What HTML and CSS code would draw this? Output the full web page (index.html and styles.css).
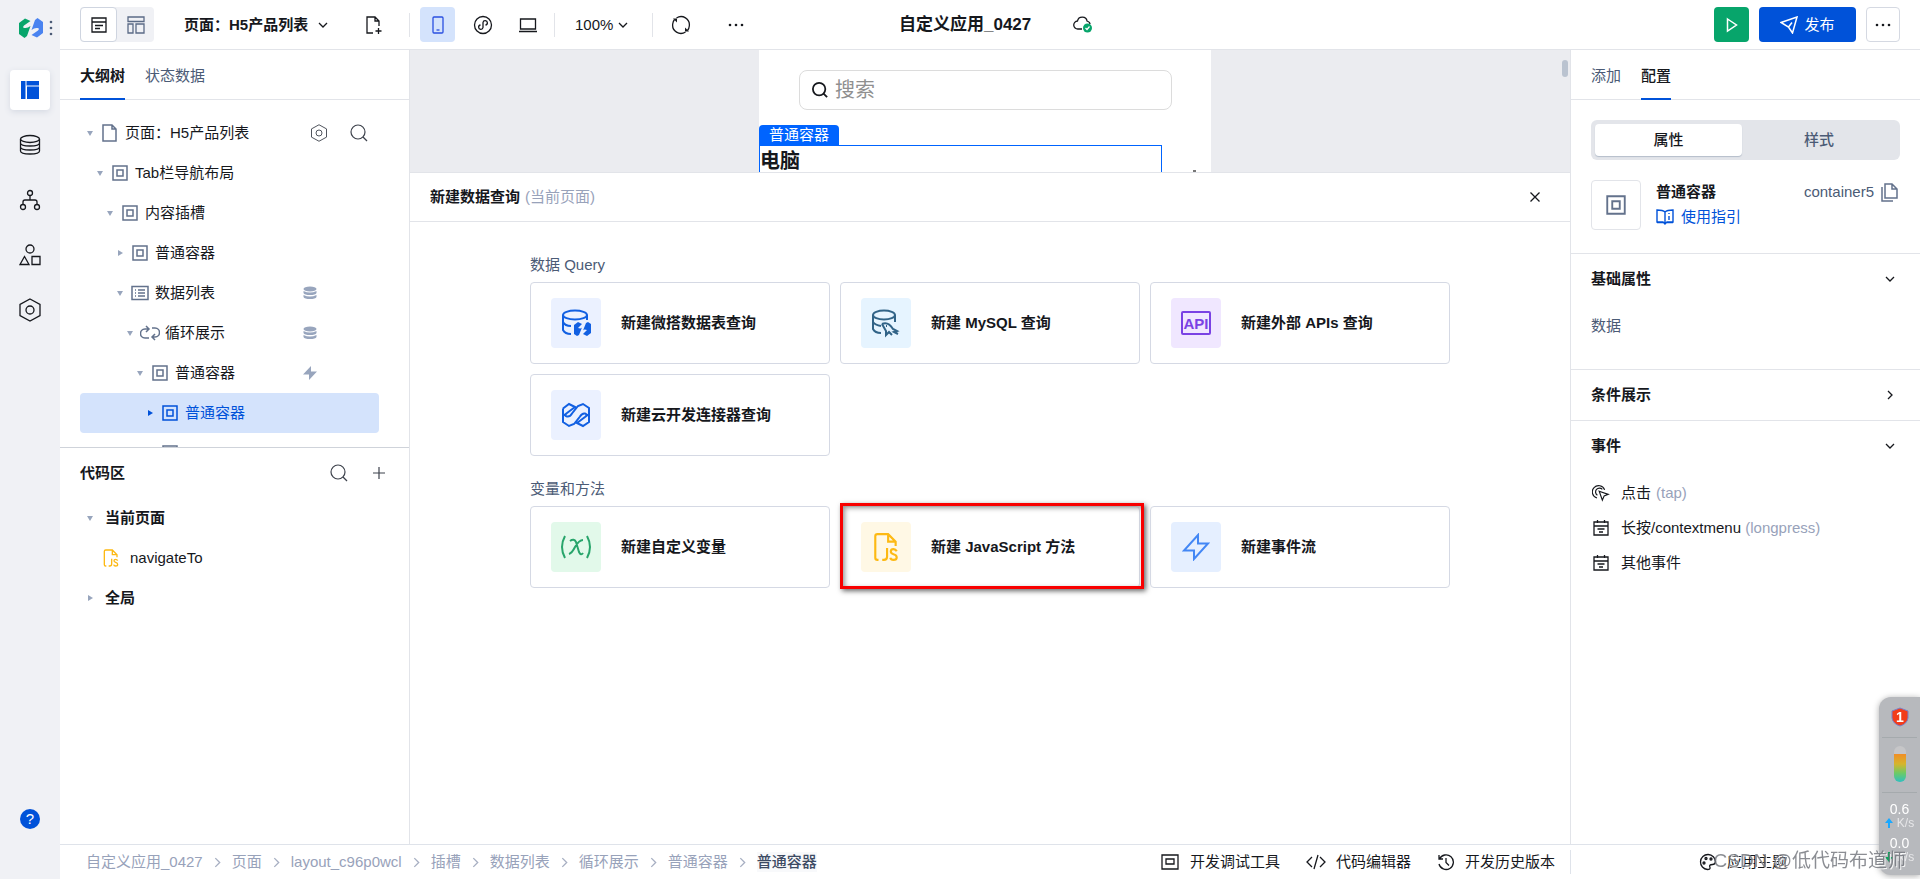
FILE: index.html
```html
<!DOCTYPE html>
<html lang="zh-CN">
<head>
<meta charset="utf-8">
<meta name="viewport" content="width=device-width, initial-scale=1">
<title>自定义应用_0427</title>
<link rel="stylesheet" href="styles.css">
</head>
<body>
<svg class="defs" aria-hidden="true">
  <symbol id="box" viewBox="0 0 16 16"><path d="M1 1h14v14H1zM5 5h6v6H5z"/></symbol>
  <symbol id="search" viewBox="0 0 18 18"><circle cx="8" cy="8" r="7"/><path d="M13 13l4 4"/></symbol>
  <symbol id="down" viewBox="0 0 10 10"><path d="M1 3l4 4 4-4"/></symbol>
  <symbol id="right" viewBox="0 0 10 10"><path d="M3 1l4 4-4 4"/></symbol>
  <symbol id="stack" viewBox="0 0 14 14"><ellipse class="solid" cx="7" cy="3" rx="6.500" ry="2.500"/><path class="solid" d="M.5 5q6.500 3 13 0v2q-1 2-6.500 2T.5 7zM.5 9q6.500 3.200 13 0v2q-1 2-6.500 2T.5 11z"/></symbol>
  <symbol id="jsfile" viewBox="0 0 24 28"><path d="M5 26H4a2 2 0 0 1-2-2V4a2 2 0 0 1 2-2h10l7 7v4M14 2v7h7M13 15v8q0 3-3 3H8.500M22 18q-1-2-3-2-2.500 0-2.500 2.200 0 1.600 2.500 2.500 3 .8 3 3 0 2.300-3 2.300-2.500 0-3-2"/></symbol>
  <symbol id="hex" viewBox="0 0 24 24"><path d="M12 1l10 5.500v11L12 23 2 17.500v-11z"/><circle cx="12" cy="12" r="4"/></symbol>
  <symbol id="event" viewBox="0 0 18 18"><path d="M2 3h14v13H2zM2 7h14M5.500 1v3M12.500 1v3M5.500 10h7M7 13h4"/></symbol>
</svg>

<div class="app">
  <nav class="rail" aria-label="主导航">
    <div class="brand">
      <svg width="24" height="20" viewBox="0 0 24 20"><path fill="#07a56b" d="M0 5l6-4.500L11.500 3 5 7.500Q3 9.500 5.500 10q3 .5 6-2L8 18l-2.500 2L0 16z"/><path fill="#4a83f0" d="M24 15l-6 4.500L12.500 17l6.500-4.500q2-2-.5-2.500-3-.5-6 2L16 2l2.500-2L24 4z"/></svg>
      <svg class="dots" width="4" height="16" viewBox="0 0 4 16"><circle cx="2" cy="2" r="1.300"/><circle cx="2" cy="8" r="1.300"/><circle cx="2" cy="14" r="1.300"/></svg>
    </div>
    <button class="rail-item active" aria-label="页面"><svg width="20" height="20" viewBox="0 0 20 20"><path fill="#0052d9" d="M1 1h4.500v18H1zM6.500 1H19v4.500H6.500zM7 6.500h12V19H7z"/></svg></button>
    <button class="rail-item" aria-label="数据"><svg class="line" width="22" height="22" viewBox="0 0 22 22"><ellipse cx="11" cy="5" rx="9.500" ry="3.500"/><path d="M1.500 5v12c0 4 19 4 19 0V5M1.500 9c0 4 19 4 19 0M1.500 13c0 4 19 4 19 0"/></svg></button>
    <button class="rail-item" aria-label="流程"><svg class="line" width="22" height="22" viewBox="0 0 22 22"><circle cx="11" cy="4" r="2.500"/><circle cx="4" cy="18" r="2.500"/><circle cx="18" cy="18" r="2.500"/><path d="M11 6.500V11M4 15.500V13q0-2 2-2h10q2 0 2 2v2.500"/></svg></button>
    <button class="rail-item" aria-label="组件"><svg class="line" width="22" height="22" viewBox="0 0 22 22"><circle cx="11" cy="5" r="4"/><path d="M5.500 12.500l4.500 8H1zM13 12.500h8v8h-8z"/></svg></button>
    <button class="rail-item" aria-label="设置"><svg class="line" width="24" height="24"><use href="#hex"/></svg></button>
    <button class="help" aria-label="帮助">?</button>
  </nav>

  <div class="workspace">
    <header class="topbar">
      <div class="view-toggle">
        <button class="on" aria-label="单页视图"><svg class="line" width="18" height="18" viewBox="0 0 18 18"><path d="M2 2h14v14H2zM2 6h14M5 9.500h8M5 12.500h5"/></svg></button>
        <button aria-label="布局视图"><svg class="line muted" width="18" height="18" viewBox="0 0 18 18"><path d="M1 1h16v4.500H1zM1 8h5v9H1zM9 8h8v9H9z"/></svg></button>
      </div>
      <div class="picker page-picker"><select aria-label="当前页面"><option>页面：H5产品列表</option></select><svg class="line" width="10" height="10"><use href="#down"/></svg></div>
      <button class="icon-btn add-page" aria-label="新建页面"><svg class="line" width="18" height="20" viewBox="0 0 18 20"><path d="M8 18H2V2h8l4 4v5M10 2v4h4M13.500 13v6M10.500 16h6"/></svg></button>
      <span class="rule"></span>
      <div class="devices">
        <button class="icon-btn selected" aria-label="手机"><svg class="line" width="12" height="18" viewBox="0 0 12 18"><rect x="1" y="1" width="10" height="16" rx="1"/><path d="M4.500 14h3"/></svg></button>
        <button class="icon-btn" aria-label="小程序"><svg class="line" width="20" height="20" viewBox="0 0 20 20"><circle cx="10" cy="10" r="8.500"/><path d="M10 12.500V7.500a2.200 2.200 0 1 1 2.500 2.500M10 7.500v5a2.200 2.200 0 1 1-2.500-2.500"/></svg></button>
        <button class="icon-btn" aria-label="电脑"><svg class="line" width="18" height="16" viewBox="0 0 18 16"><path d="M1.500 2h15v10h-15zM0 14.500h18"/></svg></button>
      </div>
      <span class="rule"></span>
      <div class="picker zoom-picker"><select aria-label="缩放"><option>100%</option></select><svg class="line" width="10" height="10"><use href="#down"/></svg></div>
      <span class="rule"></span>
      <button class="icon-btn refresh" aria-label="刷新"><svg class="line" width="20" height="20" viewBox="0 0 20 20"><path d="M5.500 3a8.300 8.300 0 0 1 12.800 8M14.500 17a8.300 8.300 0 0 1-12.800-8M3.500 4.500A8 8 0 0 0 1.700 9M16.500 15.500A8 8 0 0 0 18.300 11"/><path class="tip" d="M2 3.500h4v4zM18 16.500h-4v-4z"/></svg></button>
      <button class="icon-btn more-tools" aria-label="更多"><svg width="16" height="4" viewBox="0 0 16 4"><circle cx="2" cy="2" r="1.300"/><circle cx="8" cy="2" r="1.300"/><circle cx="14" cy="2" r="1.300"/></svg></button>
      <h1>自定义应用_0427</h1>
      <svg class="cloud" width="20" height="17" viewBox="0 0 20 17"><path class="outline" d="M9 13H5a4 4 0 0 1-.5-8C5.500-.5 13.500 0 14 5q3 1 3 3"/><circle cx="14.500" cy="12" r="4.500" fill="#07a56b"/><path d="M12.500 12l1.500 1.500 2.500-3" fill="none" stroke="#fff" stroke-width="1.200"/></svg>
      <div class="actions">
        <button class="run" aria-label="预览"><svg width="12" height="16" viewBox="0 0 12 16"><path d="M1.500 2l9 6-9 6z"/></svg></button>
        <button class="publish"><svg width="18" height="18" viewBox="0 0 18 18"><path d="M1 6.500L17 1l-4.500 16-4-6zM8.500 11L12 6.500"/></svg>发布</button>
        <button class="more" aria-label="更多操作"><svg width="16" height="4" viewBox="0 0 16 4"><circle cx="2" cy="2" r="1.300"/><circle cx="8" cy="2" r="1.300"/><circle cx="14" cy="2" r="1.300"/></svg></button>
      </div>
    </header>

    <div class="columns">
      <aside class="outline-panel">
        <div class="tabs" role="tablist"><button role="tab" class="current" aria-selected="true">大纲树</button><button role="tab">状态数据</button></div>
        <ul class="tree">
          <li class="lv0"><span class="caret"></span><svg class="slate" width="16" height="20" viewBox="0 0 16 20"><path d="M1 2h9l4 4v12H1zM10 2v4h4"/></svg><span>页面：H5产品列表</span>
            <span class="root-tools"><button class="bare" aria-label="页面设置"><svg class="line thin" width="18" height="18"><use href="#hex"/></svg></button><button class="bare" aria-label="搜索"><svg class="line thin" width="18" height="18"><use href="#search"/></svg></button></span></li>
          <li class="lv1"><span class="caret"></span><svg class="slate"><use href="#box"/></svg><span>Tab栏导航布局</span></li>
          <li class="lv2"><span class="caret"></span><svg class="slate"><use href="#box"/></svg><span>内容插槽</span></li>
          <li class="lv3"><span class="caret shut"></span><svg class="slate"><use href="#box"/></svg><span>普通容器</span></li>
          <li class="lv3"><span class="caret"></span><svg class="slate wide" viewBox="0 0 20 16"><path d="M2 1.500h16v13H2zM5 5h1M5 8h1M5 11h1M8 5h7M8 8h7M8 11h7"/></svg><span>数据列表</span><svg class="mark"><use href="#stack"/></svg></li>
          <li class="lv4"><span class="caret"></span><svg class="slate wide" viewBox="0 0 20 16"><path d="M9 13H5C-1 13-1 4 5 4h3M6 1l3 3-3 3M12 3h3c6 0 6 9 0 9h-3M15 9l-3 3 3 3"/></svg><span>循环展示</span><svg class="mark"><use href="#stack"/></svg></li>
          <li class="lv5"><span class="caret"></span><svg class="slate"><use href="#box"/></svg><span>普通容器</span><svg class="mark" viewBox="0 0 14 14"><path class="solid" d="M8 0v5.500h6L6 14V8.500H0z"/></svg></li>
          <li class="lv6 picked"><span class="caret shut"></span><svg class="slate"><use href="#box"/></svg><span>普通容器</span></li>
          <li class="lv6"><span class="caret"></span><svg class="slate"><use href="#box"/></svg></li>
        </ul>
        <section class="code">
          <header><h2>代码区</h2><button class="bare" aria-label="搜索代码"><svg class="line thin" width="18" height="18"><use href="#search"/></svg></button><button class="bare" aria-label="新建"><svg class="line thin" width="14" height="14" viewBox="0 0 14 14"><path d="M7 1v12M1 7h12"/></svg></button></header>
          <ul>
            <li><span class="caret"></span><b>当前页面</b></li>
            <li class="file"><svg width="16" height="20"><use href="#jsfile"/></svg>navigateTo</li>
            <li><span class="caret shut"></span><b>全局</b></li>
          </ul>
        </section>
      </aside>

      <main class="stage">
        <div class="canvas">
          <div class="phone">
            <label class="phone-search"><svg class="line" width="16" height="16"><use href="#search"/></svg><input type="search" placeholder="搜索" aria-label="搜索"></label>
            <span class="sel-tag">普通容器</span>
            <div class="sel-box">电脑</div>
            <span class="speck"></span>
          </div>
          <span class="thumb"></span>
        </div>
        <section class="dialog">
          <header><h2>新建数据查询</h2><span>(当前页面)</span><button class="bare" aria-label="关闭"><svg class="line" width="12" height="12" viewBox="0 0 12 12"><path d="M1.500 1.500l9 9M10.500 1.500l-9 9"/></svg></button></header>
          <div class="choices">
            <h3>数据 Query</h3>
            <div class="grid">
              <button class="card"><i class="blue"><svg width="30" height="30" viewBox="0 0 30 30"><ellipse cx="14" cy="7" rx="12" ry="4.500"/><path d="M2 7v15q2 4 8 4M2 14q2 4 8 4M26 7v5"/><path class="solid" d="M13 17l4-3 4 2-4 4q3 1 4-.5L18 27l-2 1-3-2zM30 25l-4 3-4-2 4-4q-3-1-4 .5L25 15l2-1 3 2z"/></svg></i>新建微搭数据表查询</button>
              <button class="card"><i class="sky"><svg width="30" height="30" viewBox="0 0 30 30"><ellipse cx="13" cy="7" rx="11" ry="4.500"/><path d="M2 7v14q2 4 8 4M24 7v7M2 14q2 3 8 4M11 16q6-3 11 5l4 2-3 1 4 2M11 16l4 7v4l3-3 3 3M15 18h1"/></svg></i>新建 MySQL 查询</button>
              <button class="card"><i class="violet"><svg width="32" height="26" viewBox="0 0 32 26"><rect x="2" y="2" width="28" height="22" rx="1"/><text x="16" y="19" text-anchor="middle" font-size="15">API</text></svg></i>新建外部 APIs 查询</button>
              <button class="card"><i class="blue"><svg width="30" height="26" viewBox="0 0 30 26"><path d="M2 6.500L8 2l6 3-8 6q-3 2.500 0 3.500 3 .5 5-3L17 4l5-2 6 4v14l-6 4-6-3 8-6q3-2.500 0-3.500-3-.5-5 3L13 22l-5 2-6-4V6.500M6 11l-4 3M24 15l4-3"/></svg></i>新建云开发连接器查询</button>
            </div>
            <h3>变量和方法</h3>
            <div class="grid">
              <button class="card"><i class="green"><svg width="34" height="30" viewBox="0 0 34 30"><path d="M6 4q-6 11 0 22M28 4q6 11 0 22M11 9q4-3 6 1l3 10q2 4 4 1M24 8q-4 0-8 7-3 6-6 7"/></svg></i>新建自定义变量</button>
              <button class="card flagged"><i class="amber"><svg width="26" height="30"><use href="#jsfile"/></svg></i>新建 JavaScript 方法</button>
              <button class="card"><i class="azure"><svg width="28" height="28" viewBox="0 0 28 28"><path d="M16 2v8.500h10L12 26v-8.500H2z"/></svg></i>新建事件流</button>
            </div>
          </div>
        </section>
      </main>

      <aside class="props">
        <div class="tabs" role="tablist"><button role="tab">添加</button><button role="tab" class="current" aria-selected="true">配置</button></div>
        <section class="identity">
          <div class="segmented"><button class="on">属性</button><button>样式</button></div>
          <div class="component">
            <div class="preview"><svg class="slate" width="20" height="20"><use href="#box"/></svg></div>
            <div class="naming"><h2>普通容器</h2><a href="#guide"><svg width="18" height="18" viewBox="0 0 18 18"><path d="M9 15V4Q7 2 1 2v12h6l2 2 2-2h6V2q-6 0-8 2M13 5v1M13 8v4M1 14.500h6M11 14.500h6"/></svg>使用指引</a></div>
            <div class="ident">container5<button class="bare" aria-label="复制"><svg class="slate" width="17" height="19" viewBox="0 0 17 19"><path d="M4 1h7l5 5v9H4zM11 1v5h5M1 4v14h11"/></svg></button></div>
          </div>
        </section>
        <section class="group"><button class="fold">基础属性<svg class="line"><use href="#down"/></svg></button><p class="field">数据</p></section>
        <section class="group"><button class="fold">条件展示<svg class="line"><use href="#right"/></svg></button></section>
        <section class="group"><button class="fold">事件<svg class="line"><use href="#down"/></svg></button>
          <ul class="events">
            <li><svg class="line" width="20" height="20" viewBox="0 0 20 20"><path d="M8 8l10 3.500-4.500 1.700L11.500 18zM6 12.500A4.300 4.300 0 1 1 11.500 6M5.500 15.500A7 7 0 1 1 14 6.500"/></svg>点击 <em>(tap)</em></li>
            <li><svg class="line" width="18" height="18"><use href="#event"/></svg><span>长按/contextmenu <em>(longpress)</em></span></li>
            <li><svg class="line" width="18" height="18"><use href="#event"/></svg>其他事件</li>
          </ul>
        </section>
      </aside>
    </div>

    <footer class="statusbar">
      <nav class="crumbs" aria-label="层级">
        <a href="#app">自定义应用_0427</a><svg><use href="#right"/></svg><a href="#page">页面</a><svg><use href="#right"/></svg><a href="#layout">layout_c96p0wcl</a><svg><use href="#right"/></svg><a href="#slot">插槽</a><svg><use href="#right"/></svg><a href="#list">数据列表</a><svg><use href="#right"/></svg><a href="#loop">循环展示</a><svg><use href="#right"/></svg><a href="#outer">普通容器</a><svg><use href="#right"/></svg><a href="#inner" class="here">普通容器</a>
      </nav>
      <div class="dev-tools">
        <button><svg class="line" width="20" height="18" viewBox="0 0 20 18"><path d="M2 2h16v14H2zM6 6h8v5H6z"/></svg>开发调试工具</button>
        <button><svg class="line" width="20" height="18" viewBox="0 0 20 18"><path d="M6 4L1 9l5 5M14 4l5 5-5 5M12 2L8 16"/></svg>代码编辑器</button>
        <button><svg class="line" width="18" height="18" viewBox="0 0 18 18"><path d="M2 2v4h4M2.500 6A7.300 7.300 0 1 1 2 11M9 5v4.500l3 3"/></svg>开发历史版本</button>
      </div>
      <div class="theme"><button><svg class="line" width="18" height="18" viewBox="0 0 18 18"><path d="M8.500 16.500a7.500 7.500 0 1 1 8-7.500q-.5 2.500-3 2.500-4 0-2.500 3 .5 2-2.500 2z"/><circle cx="5" cy="10" r="1"/><circle cx="7" cy="5.500" r="1"/><circle cx="12" cy="6" r="1"/></svg>应用主题</button></div>
    </footer>
  </div>
</div>

<div class="monitor">
  <svg width="18" height="20" viewBox="0 0 18 20"><path d="M9 1l8 3v7q-1 6-8 8-7-2-8-8V4z" fill="#f23c1b" stroke="#7b80c8"/><text x="9" y="15" text-anchor="middle" font-size="14" font-weight="700" fill="#fff">1</text></svg>
  <hr><span class="tube"></span><hr>
  <div class="rate"><span>0.6</span><small><svg width="8" height="10" viewBox="0 0 8 10"><path d="M4 0l4 5H5v5H3V5H0z" fill="#1aa8ff"/></svg>K/s</small></div>
  <div class="rate"><span>0.0</span><small><svg width="8" height="10" viewBox="0 0 8 10"><path d="M4 10l4-5H5V0H3v5H0z" fill="#12a05c"/></svg>K/s</small></div>
</div>
<div class="watermark">CSDN @低代码布道师</div>
</body>
</html>
```
FILE: styles.css
```css
* { box-sizing: border-box; }
body { margin: 0; font: 15px/20px "Liberation Sans", "Noto Sans CJK SC", sans-serif; color: #16181d; background: #fff; overflow: hidden; }
button, input, select { font: inherit; color: inherit; border: 0; padding: 0; margin: 0; background: none; }
h1, h2, h3, p, ul { margin: 0; padding: 0; font-size: 15px; line-height: 20px; }
ul { list-style: none; }
a { text-decoration: none; color: inherit; }
em, i { font-style: normal; }
svg { flex: none; display: block; fill: none; }
.defs { position: absolute; width: 0; height: 0; }
.line { stroke: #16181d; stroke-width: 1.3; }
.line.thin { stroke: #3d424c; stroke-width: 1.2; }
.line.muted { stroke: #5b6b86; }
.slate { stroke: #63728c; stroke-width: 1.5; }
.solid { fill: currentColor; stroke: none; }
.bare { display: grid; place-items: center; }

.app { display: flex; height: 100vh; }
.rail { flex: 0 0 60px; background: #f0f1f5; display: flex; flex-direction: column; align-items: center; padding-bottom: 50px; }
.brand { display: flex; align-items: center; gap: 6px; height: 55px; padding-left: 11px; margin-bottom: 15px; }
.dots { fill: #4b5b76; }
.rail-item { width: 40px; height: 40px; margin-bottom: 15px; display: grid; place-items: center; border-radius: 4px; }
.rail-item.active { background: #fff; box-shadow: 0 2px 6px #d5d9e2; }
.help { width: 20px; height: 20px; margin-top: auto; border-radius: 50%; background: #0052d9; color: #fff; }
.workspace { flex: 1; min-width: 0; display: flex; flex-direction: column; }

.topbar { flex: 0 0 50px; border-bottom: 1px solid #e2e4e9; display: flex; align-items: center; padding: 0 20px; }
.view-toggle { display: flex; height: 35px; background: #f0f1f5; border-radius: 4px; }
.view-toggle button { width: 37px; display: grid; place-items: center; border-radius: 4px; }
.view-toggle .on { background: #fff; border: 1px solid #cfd5e0; }
.picker { position: relative; display: flex; align-items: center; }
.picker select { appearance: none; outline: 0; width: 100%; }
.picker svg { position: absolute; right: 0; pointer-events: none; }
.page-picker { width: 144px; margin-left: 30px; font-weight: 700; }
.icon-btn { width: 35px; height: 35px; display: grid; place-items: center; border-radius: 4px; }
.icon-btn circle { fill: #16181d; }
.icon-btn .line circle { fill: none; }
.icon-btn .tip { fill: #16181d; stroke: none; }
.add-page { margin: 0 18px 0 28px; }
.rule { width: 1px; height: 24px; background: #e2e4e9; }
.devices { display: flex; gap: 10px; margin: 0 9px 0 10px; }
.selected { background: #d4e3fc; }
.selected .line { stroke: #2a50e0; }
.zoom-picker { width: 53px; margin: 0 24px 0 20px; }
.refresh { margin: 0 20px 0 10px; }
h1 { font-size: 17px; margin-left: 146px; white-space: nowrap; }
.cloud { margin-left: 42px; }
.cloud .outline { stroke: #16181d; stroke-width: 1.3; }
.actions { display: flex; gap: 10px; margin-left: auto; }
.actions button { height: 35px; border-radius: 4px; display: flex; align-items: center; justify-content: center; gap: 6px; }
.actions .run { width: 35px; background: #07a56b; }
.actions .publish { width: 97px; background: #0052d9; color: #fff; }
.run svg, .publish svg { stroke: #fff; stroke-width: 1.5; }
.actions .more { width: 34px; border: 1px solid #d5d9e2; }
.more svg { fill: #16181d; }

.columns { flex: 1; min-height: 0; display: flex; }
.outline-panel { flex: 0 0 350px; border-right: 1px solid #e2e4e9; display: flex; flex-direction: column; }
.tabs { flex: none; display: flex; gap: 20px; height: 50px; padding: 0 20px; border-bottom: 1px solid #e2e4e9; color: #4b5b76; }
.tabs button { height: 50px; padding-top: 4px; border-bottom: 2px solid transparent; }
.tabs .current { color: #16181d; border-color: #0052d9; font-weight: 500; }
.outline-panel .current, b { font-weight: 700; }
.tree { flex: none; height: 347px; padding: 13px 30px 0 20px; overflow: hidden; }
.tree li { display: flex; align-items: center; height: 40px; padding-right: 62px; border-radius: 4px; }
.tree svg { width: 16px; height: 16px; }
.tree li > .slate { margin: 0 7px 0 6px; }
.tree li > .wide { width: 20px; margin: 0 5px 0 4px; }
.tree .lv0 > .slate { height: 20px; }
.caret { flex: none; width: 12px; height: 12px; display: grid; place-items: center; color: #98a5bd; }
.caret::before { content: ""; border: 3px solid transparent; border-top: 5px solid; border-bottom: 0; }
.caret.shut::before { border: 3px solid transparent; border-left: 5px solid; border-right: 0; }
.lv0 { padding-left: 4px; } .lv1 { padding-left: 14px; } .lv2 { padding-left: 24px; } .lv3 { padding-left: 34px; }
.lv4 { padding-left: 44px; } .lv5 { padding-left: 54px; } .lv6 { padding-left: 64px; }
.tree li > .mark { width: 14px; height: 14px; margin-left: auto; color: #98a5bd; }
.picked { background: #d4e3fc; color: #0052d9; }
.picked .caret { color: #0052d9; }
.picked .slate { stroke: #0052d9; }
.root-tools { display: flex; gap: 22px; margin-left: auto; margin-right: -51px; }
.root-tools svg { width: 18px; height: 18px; }
.code { border-top: 1px solid #cfd3da; }
.code header { display: flex; align-items: center; gap: 24px; height: 50px; padding: 0 23px 0 20px; }
.code h2 { margin-right: auto; }
.code li { display: flex; align-items: center; height: 40px; padding-left: 24px; gap: 9px; }
.code .file { padding-left: 43px; gap: 11px; }
.file svg { stroke: #fdb913; stroke-width: 2; }

.stage { flex: 1; min-width: 0; display: flex; flex-direction: column; }
.canvas { position: relative; flex: 0 0 122px; background: #ebecf0; display: flex; justify-content: center; overflow: hidden; }
.phone { position: relative; width: 452px; margin-right: 10px; padding: 20px 0 0; background: #fff; }
.phone-search { display: flex; align-items: center; gap: 7px; height: 40px; margin: 0 39px 15px 40px; padding: 0 12px; border: 1px solid #dcdcdc; border-radius: 8px; font-size: 20px; }
.phone-search input { flex: 1; min-width: 0; outline: 0; }
.phone-search .line { stroke-width: 2; }
.phone-search input::placeholder { color: #8f8f8f; }
.sel-tag { display: block; width: 80px; height: 20px; padding-left: 10px; background: #0064ff; color: #fff; border-radius: 4px 4px 0 0; }
.sel-box { width: 403px; height: 50px; border: 1px solid #0064ff; font-size: 20px; line-height: 30px; font-weight: 700; }
.speck { position: absolute; right: 15px; bottom: 0; width: 3px; height: 2px; background: #777; }
.thumb { position: absolute; right: 2px; top: 10px; width: 6px; height: 17px; border-radius: 3px; background: #bac3d0; }
.dialog { flex: 1; border-top: 1px solid #e2e4e9; }
.dialog header { display: flex; align-items: center; gap: 5px; height: 49px; padding: 0 29px 0 20px; border-bottom: 1px solid #e2e4e9; }
.dialog header span { color: #98a2ba; }
.dialog header button { margin-left: auto; }
.choices { max-width: 960px; margin: 0 auto; padding: 33px 20px; }
h3 { font-weight: 400; color: #4b5b76; margin-bottom: 7px; }
.grid { display: grid; grid-template-columns: repeat(3, 1fr); gap: 10px; margin-bottom: 23px; }
.card { position: relative; display: flex; align-items: center; gap: 20px; height: 82px; padding: 0 20px; border: 1px solid #d5d9e4; border-radius: 4px; font-weight: 700; }
.card i { width: 50px; height: 50px; border-radius: 4px; display: grid; place-items: center; }
.card svg { stroke: currentColor; stroke-width: 2; }
.card text { fill: currentColor; stroke: none; font-weight: 700; }
.blue { background: #ebf1ff; color: #1260e2; }
.sky { background: #e6f4ff; color: #316387; }
.violet { background: #f0e7ff; color: #7a42e4; }
.green { background: #e2f9ea; color: #28a56b; }
.amber { background: #fff8e5; color: #fdb913; }
.azure { background: #e5efff; color: #4387f5; }
.flagged::after { content: ""; position: absolute; inset: -4px -5px -2px -1px; border: 3px solid #f80000; box-shadow: 2px 2px 5px #666, inset 2px 2px 5px #999; }

.props { flex: 0 0 350px; border-left: 1px solid #e2e4e9; }
.identity { padding: 20px 20px 23px; }
.segmented { display: flex; height: 40px; padding: 4px; background: #e3e5ea; border-radius: 6px; color: #4b5b76; }
.segmented button { flex: 1; border-radius: 4px; font-weight: 500; }
.segmented .on { flex: 0 0 147px; background: #fff; color: #16181d; box-shadow: 0 1px 1px #b4bdca; }
.component { display: flex; margin-top: 20px; }
.preview { width: 50px; height: 50px; border: 1px solid #e2e4e9; border-radius: 4px; display: grid; place-items: center; }
.naming { margin-left: 15px; }
.naming h2 { margin: 2px 0 5px; }
.naming a { display: flex; align-items: center; gap: 7px; color: #0052d9; }
.naming svg { stroke: #0052d9; stroke-width: 1.4; }
.ident { display: flex; gap: 7px; margin: 2px 2px 0 auto; height: 20px; color: #4b5b76; }
.group { border-top: 1px solid #e2e4e9; }
.fold { display: flex; align-items: center; justify-content: space-between; width: 100%; height: 50px; padding: 0 25px 0 20px; font-weight: 700; }
.fold svg { width: 10px; height: 10px; }
.field { padding: 12px 20px 33px; color: #4b5b76; }
.events { padding: 4px 20px; }
.events li { display: flex; align-items: center; height: 35px; gap: 5px; }
.events .line { width: 18px; margin: 0 6px 0 1px; }
.events em { color: #98a2ba; }

.statusbar { flex: 0 0 35px; border-top: 1px solid #dfe3ea; display: flex; align-items: center; }
.crumbs { display: flex; align-items: center; gap: 9px; padding-left: 26px; color: #98a2ba; white-space: nowrap; }
.crumbs svg { width: 11px; height: 11px; stroke: #a7afc2; stroke-width: 1.2; }
.crumbs .here { color: #3d4b63; font-weight: 500; background: #f8f9fb; }
.dev-tools { display: flex; gap: 26px; margin-left: auto; padding-right: 15px; }
.statusbar button { display: flex; align-items: center; gap: 10px; }
.theme { width: 350px; height: 24px; padding-left: 128px; border-left: 1px solid #dfe3ea; display: flex; align-items: center; }

.monitor { position: fixed; right: 0; bottom: 4px; width: 41px; height: 178px; padding: 10px 3px; background: #b7b9bd; border-radius: 12px 0 0 12px; box-shadow: 0 1px 6px #aaa; display: flex; flex-direction: column; align-items: center; color: #fff; }
.monitor hr { width: 100%; border: 0; border-top: 1px solid #a5aaad; margin: 10px 0 8px; }
.tube { flex: none; width: 12px; height: 36px; border-radius: 6px; background: linear-gradient(#c6c6c8 22%, #f18d25 22%, #d6b52b 50%, #6dca65 75%, #2fc0c0); }
.rate { display: flex; flex-direction: column; align-items: center; font-size: 14px; line-height: 16px; margin-bottom: 6px; }
.rate small { display: flex; align-items: center; gap: 4px; font-size: 12px; line-height: 12px; color: #e7e7e9; }
.watermark { position: fixed; right: 14px; bottom: 4px; font-size: 19px; line-height: 28px; color: #777a80; text-shadow: 1px 1px 0 #fff; opacity: .85; white-space: nowrap; }
```
